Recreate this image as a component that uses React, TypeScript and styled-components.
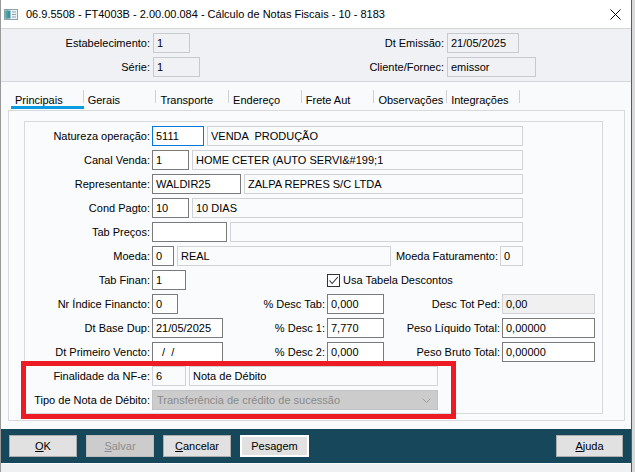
import React from "react";
import styled, { createGlobalStyle } from "styled-components";

const GlobalStyle = createGlobalStyle`
  body {
    margin: 0;
    background: #d9d9d9;
    font-family: "Liberation Sans", Arial, sans-serif;
  }
`;

const FONT = `"Liberation Sans", Arial, sans-serif`;

const Window = styled.div`
  position: relative;
  width: 632px;
  height: 472px;
  box-sizing: border-box;
  border-left: 1px solid #9a9a9a;
  border-right: 1px solid #5a5a5a;
  background: #f9fafb;
  display: flex;
  flex-direction: column;
  font-family: ${FONT};
  font-size: 11px;
  color: #000;
  overflow: hidden;
`;

const TitleBar = styled.div`
  height: 28px;
  flex-shrink: 0;
  display: flex;
  align-items: center;
  padding-left: 3px;
  background: #ffffff;
  border-bottom: 1px solid #d6d6d6;
`;

const TitleText = styled.span`
  font-size: 11px;
  margin-left: 8px;
  white-space: nowrap;
`;

const CloseButton = styled.div`
  margin-left: auto;
  margin-right: 10px;
  width: 11px;
  height: 11px;
  display: flex;
`;

const Header = styled.div`
  height: 53px;
  flex-shrink: 0;
  box-sizing: border-box;
  padding-top: 4px;
  background: #f0f1f4;
  border-bottom: 1px solid #d3d5d8;
  display: grid;
  grid-template-columns: 149px 50px 238px auto;
  grid-auto-rows: 20px;
  column-gap: 3px;
  row-gap: 4px;
  align-items: center;
`;

const HeaderLabel = styled.span`
  text-align: right;
  white-space: nowrap;
`;

const HeaderInput = styled.input<{ $w: number }>`
  width: ${(p) => p.$w}px;
  height: 20px;
  box-sizing: border-box;
  border: 1px solid #c8c9cc;
  background: transparent;
  padding: 0 3px;
  font-family: ${FONT};
  font-size: 11px;
  color: #000;
  outline: none;
`;

const TabArea = styled.div`
  height: 347px;
  flex-shrink: 0;
  box-sizing: border-box;
  padding: 5px 6px 0 7px;
  display: flex;
  flex-direction: column;
`;

const TabStrip = styled.div`
  height: 23px;
  display: flex;
  padding-left: 3px;
`;

const Tab = styled.div<{ $active?: boolean }>`
  position: relative;
  width: 72.7px;
  height: 23px;
  box-sizing: border-box;
  padding: 2px 0 0 4px;
  display: flex;
  align-items: center;
  white-space: nowrap;

  &::before {
    content: "";
    display: ${(p) => (p.$active ? "block" : "none")};
    position: absolute;
    left: 0;
    right: 0;
    bottom: 1px;
    height: 3px;
    background: #0a9be2;
  }

  &::after {
    content: "";
    position: absolute;
    right: 0;
    top: 3px;
    width: 1px;
    height: 13px;
    background: #cfd1d4;
  }
`;

const Panel = styled.div`
  height: 311px;
  box-sizing: border-box;
  border: 1px solid #d7d9dc;
  background: #fafbfc;
  padding: 10px 21px 6px 15px;
`;

const GroupBox = styled.div`
  height: 293px;
  box-sizing: border-box;
  border: 1px solid #d7d9dc;
  padding-top: 4px;
  display: flex;
  flex-direction: column;
  gap: 4px;
`;

const Row = styled.div`
  height: 20px;
  display: flex;
  align-items: center;
`;

const Label = styled.span<{ $w?: number }>`
  width: ${(p) => p.$w ?? 125}px;
  flex-shrink: 0;
  margin-right: 2px;
  text-align: right;
  white-space: nowrap;
`;

type Kind = "edit" | "ro" | "focus" | "gray";

const borderFor: Record<Kind, string> = {
  edit: "#7a7a7a",
  ro: "#d0d2d5",
  focus: "#0078d7",
  gray: "#d0d2d5",
};

const bgFor: Record<Kind, string> = {
  edit: "#ffffff",
  ro: "#fafbfc",
  focus: "#ffffff",
  gray: "#f0f0f0",
};

const Input = styled.input<{ $w: number; $kind?: Kind; $ml?: number }>`
  width: ${(p) => p.$w}px;
  height: 20px;
  flex-shrink: 0;
  box-sizing: border-box;
  margin: 0 0 0 ${(p) => p.$ml ?? 0}px;
  border: 1px solid ${(p) => borderFor[p.$kind ?? "edit"]};
  background: ${(p) => bgFor[p.$kind ?? "edit"]};
  padding: 0 3px;
  font-family: ${FONT};
  font-size: 11px;
  color: #000;
  outline: none;
`;

const Select = styled.div<{ $w: number }>`
  width: ${(p) => p.$w}px;
  height: 20px;
  box-sizing: border-box;
  border: 1px solid #c2c2c2;
  background: #cccccc;
  color: #8a8a8a;
  padding: 0 6px 0 4px;
  display: flex;
  align-items: center;
  justify-content: space-between;
  white-space: nowrap;
`;

const CheckWrap = styled.label<{ $ml: number }>`
  margin-left: ${(p) => p.$ml}px;
  display: flex;
  align-items: center;
  gap: 3px;
  white-space: nowrap;
`;

const CheckBox = styled.span`
  width: 13px;
  height: 13px;
  box-sizing: border-box;
  border: 1px solid #333;
  background: #fff;
  display: flex;
  align-items: center;
  justify-content: center;
`;

const ButtonBar = styled.div`
  height: 34px;
  flex-shrink: 0;
  box-sizing: border-box;
  padding: 6px 8px 0 8px;
  background: #17475a;
  display: flex;
  align-items: flex-start;
  gap: 9px;
`;

const Button = styled.div<{ $w?: number; $disabled?: boolean; $focused?: boolean }>`
  width: ${(p) => p.$w ?? 68}px;
  height: 22px;
  box-sizing: border-box;
  border: ${(p) => (p.$focused ? "2px solid #ffffff" : `1px solid ${p.$disabled ? "#bdbdbd" : "#adadad"}`)};
  background: ${(p) => (p.$disabled ? "#cccccc" : "#e1e1e1")};
  color: ${(p) => (p.$disabled ? "#8c8c8c" : "#000")};
  display: flex;
  align-items: center;
  justify-content: center;
  font-size: 11px;
`;

const BarSpacer = styled.div`
  flex: 1;
`;

const Footer = styled.div`
  flex: 1;
  background: #eef0f2;
  border-top: 1px solid #fbfbfb;
`;

const Highlight = styled.div`
  position: absolute;
  left: 20px;
  top: 361px;
  width: 435px;
  height: 58px;
  box-sizing: border-box;
  border: 5px solid #ed1c24;
  pointer-events: none;
`;

const AppIcon = () => (
  <svg width="14" height="11" viewBox="0 0 14 11">
    <rect x="0.5" y="0.5" width="13" height="10" fill="#eef2f5" stroke="#8ea2ae" />
    <rect x="1.5" y="1.5" width="5" height="8" fill="#3f8fa8" />
    <rect x="1.5" y="1.5" width="2.5" height="8" fill="#4aa890" />
    <line x1="8" y1="3" x2="12" y2="3" stroke="#8ea2ae" />
    <line x1="8" y1="5.5" x2="12" y2="5.5" stroke="#8ea2ae" />
    <line x1="8" y1="8" x2="12" y2="8" stroke="#8ea2ae" />
  </svg>
);

const tabs = ["Principais", "Gerais", "Transporte", "Endereço", "Frete Aut", "Observações", "Integrações"];

export default function App() {
  return (
    <>
      <GlobalStyle />
      <Window>
        <TitleBar>
          <AppIcon />
          <TitleText>06.9.5508 - FT4003B - 2.00.00.084 - Cálculo de Notas Fiscais - 10 - 8183</TitleText>
          <CloseButton>
            <svg width="11" height="11" viewBox="0 0 11 11">
              <path d="M0.5 0.5 L10.5 10.5 M10.5 0.5 L0.5 10.5" stroke="#000" strokeWidth="1" />
            </svg>
          </CloseButton>
        </TitleBar>

        <Header>
          <HeaderLabel>Estabelecimento:</HeaderLabel>
          <HeaderInput $w={37} readOnly value="1" />
          <HeaderLabel>Dt Emissão:</HeaderLabel>
          <HeaderInput $w={72} readOnly value="21/05/2025" />
          <HeaderLabel>Série:</HeaderLabel>
          <HeaderInput $w={47} readOnly value="1" />
          <HeaderLabel>Cliente/Fornec:</HeaderLabel>
          <HeaderInput $w={89} readOnly value="emissor" />
        </Header>

        <TabArea>
          <TabStrip>
            {tabs.map((t, i) => (
              <Tab key={t} $active={i === 0}>
                {t}
              </Tab>
            ))}
          </TabStrip>
          <Panel>
            <GroupBox>
              <Row>
                <Label>Natureza operação:</Label>
                <Input $w={52} $kind="focus" readOnly value="5111" />
                <Input $w={316} $kind="ro" $ml={3} readOnly value="VENDA  PRODUÇÃO" />
              </Row>
              <Row>
                <Label>Canal Venda:</Label>
                <Input $w={37} readOnly value="1" />
                <Input $w={331} $kind="ro" $ml={3} readOnly value={"HOME CETER (AUTO SERVI&#199;1"} />
              </Row>
              <Row>
                <Label>Representante:</Label>
                <Input $w={89} readOnly value="WALDIR25" />
                <Input $w={279} $kind="ro" $ml={3} readOnly value="ZALPA REPRES S/C LTDA" />
              </Row>
              <Row>
                <Label>Cond Pagto:</Label>
                <Input $w={37} readOnly value="10" />
                <Input $w={331} $kind="ro" $ml={3} readOnly value="10 DIAS" />
              </Row>
              <Row>
                <Label>Tab Preços:</Label>
                <Input $w={75} readOnly value="" />
                <Input $w={293} $kind="ro" $ml={3} readOnly value="" />
              </Row>
              <Row>
                <Label>Moeda:</Label>
                <Input $w={22} readOnly value="0" />
                <Input $w={214} $kind="ro" $ml={3} readOnly value="REAL" />
                <Label $w={107}>Moeda Faturamento:</Label>
                <Input $w={23} $kind="ro" readOnly value="0" />
              </Row>
              <Row>
                <Label>Tab Finan:</Label>
                <Input $w={34} readOnly value="1" />
                <CheckWrap $ml={141}>
                  <CheckBox>
                    <svg width="11" height="11" viewBox="0 0 11 11">
                      <path d="M1.5 5.5 L4.2 8.5 L9.8 2" fill="none" stroke="#333" strokeWidth="1.1" />
                    </svg>
                  </CheckBox>
                  Usa Tabela Descontos
                </CheckWrap>
              </Row>
              <Row>
                <Label>Nr Índice Financto:</Label>
                <Input $w={26} readOnly value="0" />
                <Label $w={147}>% Desc Tab:</Label>
                <Input $w={57} readOnly value="0,000" />
                <Label $w={116}>Desc Tot Ped:</Label>
                <Input $w={93} $kind="gray" readOnly value="0,00" />
              </Row>
              <Row>
                <Label>Dt Base Dup:</Label>
                <Input $w={71} readOnly value="21/05/2025" />
                <Label $w={102}>% Desc 1:</Label>
                <Input $w={57} readOnly value="7,770" />
                <Label $w={116}>Peso Líquido Total:</Label>
                <Input $w={93} readOnly value="0,00000" />
              </Row>
              <Row>
                <Label>Dt Primeiro Vencto:</Label>
                <Input $w={71} readOnly value="  /  /" />
                <Label $w={102}>% Desc 2:</Label>
                <Input $w={57} readOnly value="0,000" />
                <Label $w={116}>Peso Bruto Total:</Label>
                <Input $w={93} readOnly value="0,00000" />
              </Row>
              <Row>
                <Label>Finalidade da NF-e:</Label>
                <Input $w={34} $kind="ro" readOnly value="6" />
                <Input $w={249} $kind="ro" $ml={3} readOnly value="Nota de Débito" />
              </Row>
              <Row>
                <Label>Tipo de Nota de Débito:</Label>
                <Select $w={286}>
                  <span>Transferência de crédito de sucessão</span>
                  <svg width="9" height="5" viewBox="0 0 9 5">
                    <path d="M0.5 0.5 L4.5 4.5 L8.5 0.5" fill="none" stroke="#9a9a9a" strokeWidth="1" />
                  </svg>
                </Select>
              </Row>
            </GroupBox>
          </Panel>
        </TabArea>

        <ButtonBar>
          <Button>
            <u>O</u>K
          </Button>
          <Button $disabled>
            <u>S</u>alvar
          </Button>
          <Button>
            <u>C</u>ancelar
          </Button>
          <Button $w={69} $focused>
            Pesagem
          </Button>
          <BarSpacer />
          <Button $w={67}>
            <u>A</u>juda
          </Button>
        </ButtonBar>
        <Footer />

        <Highlight />
      </Window>
    </>
  );
}
